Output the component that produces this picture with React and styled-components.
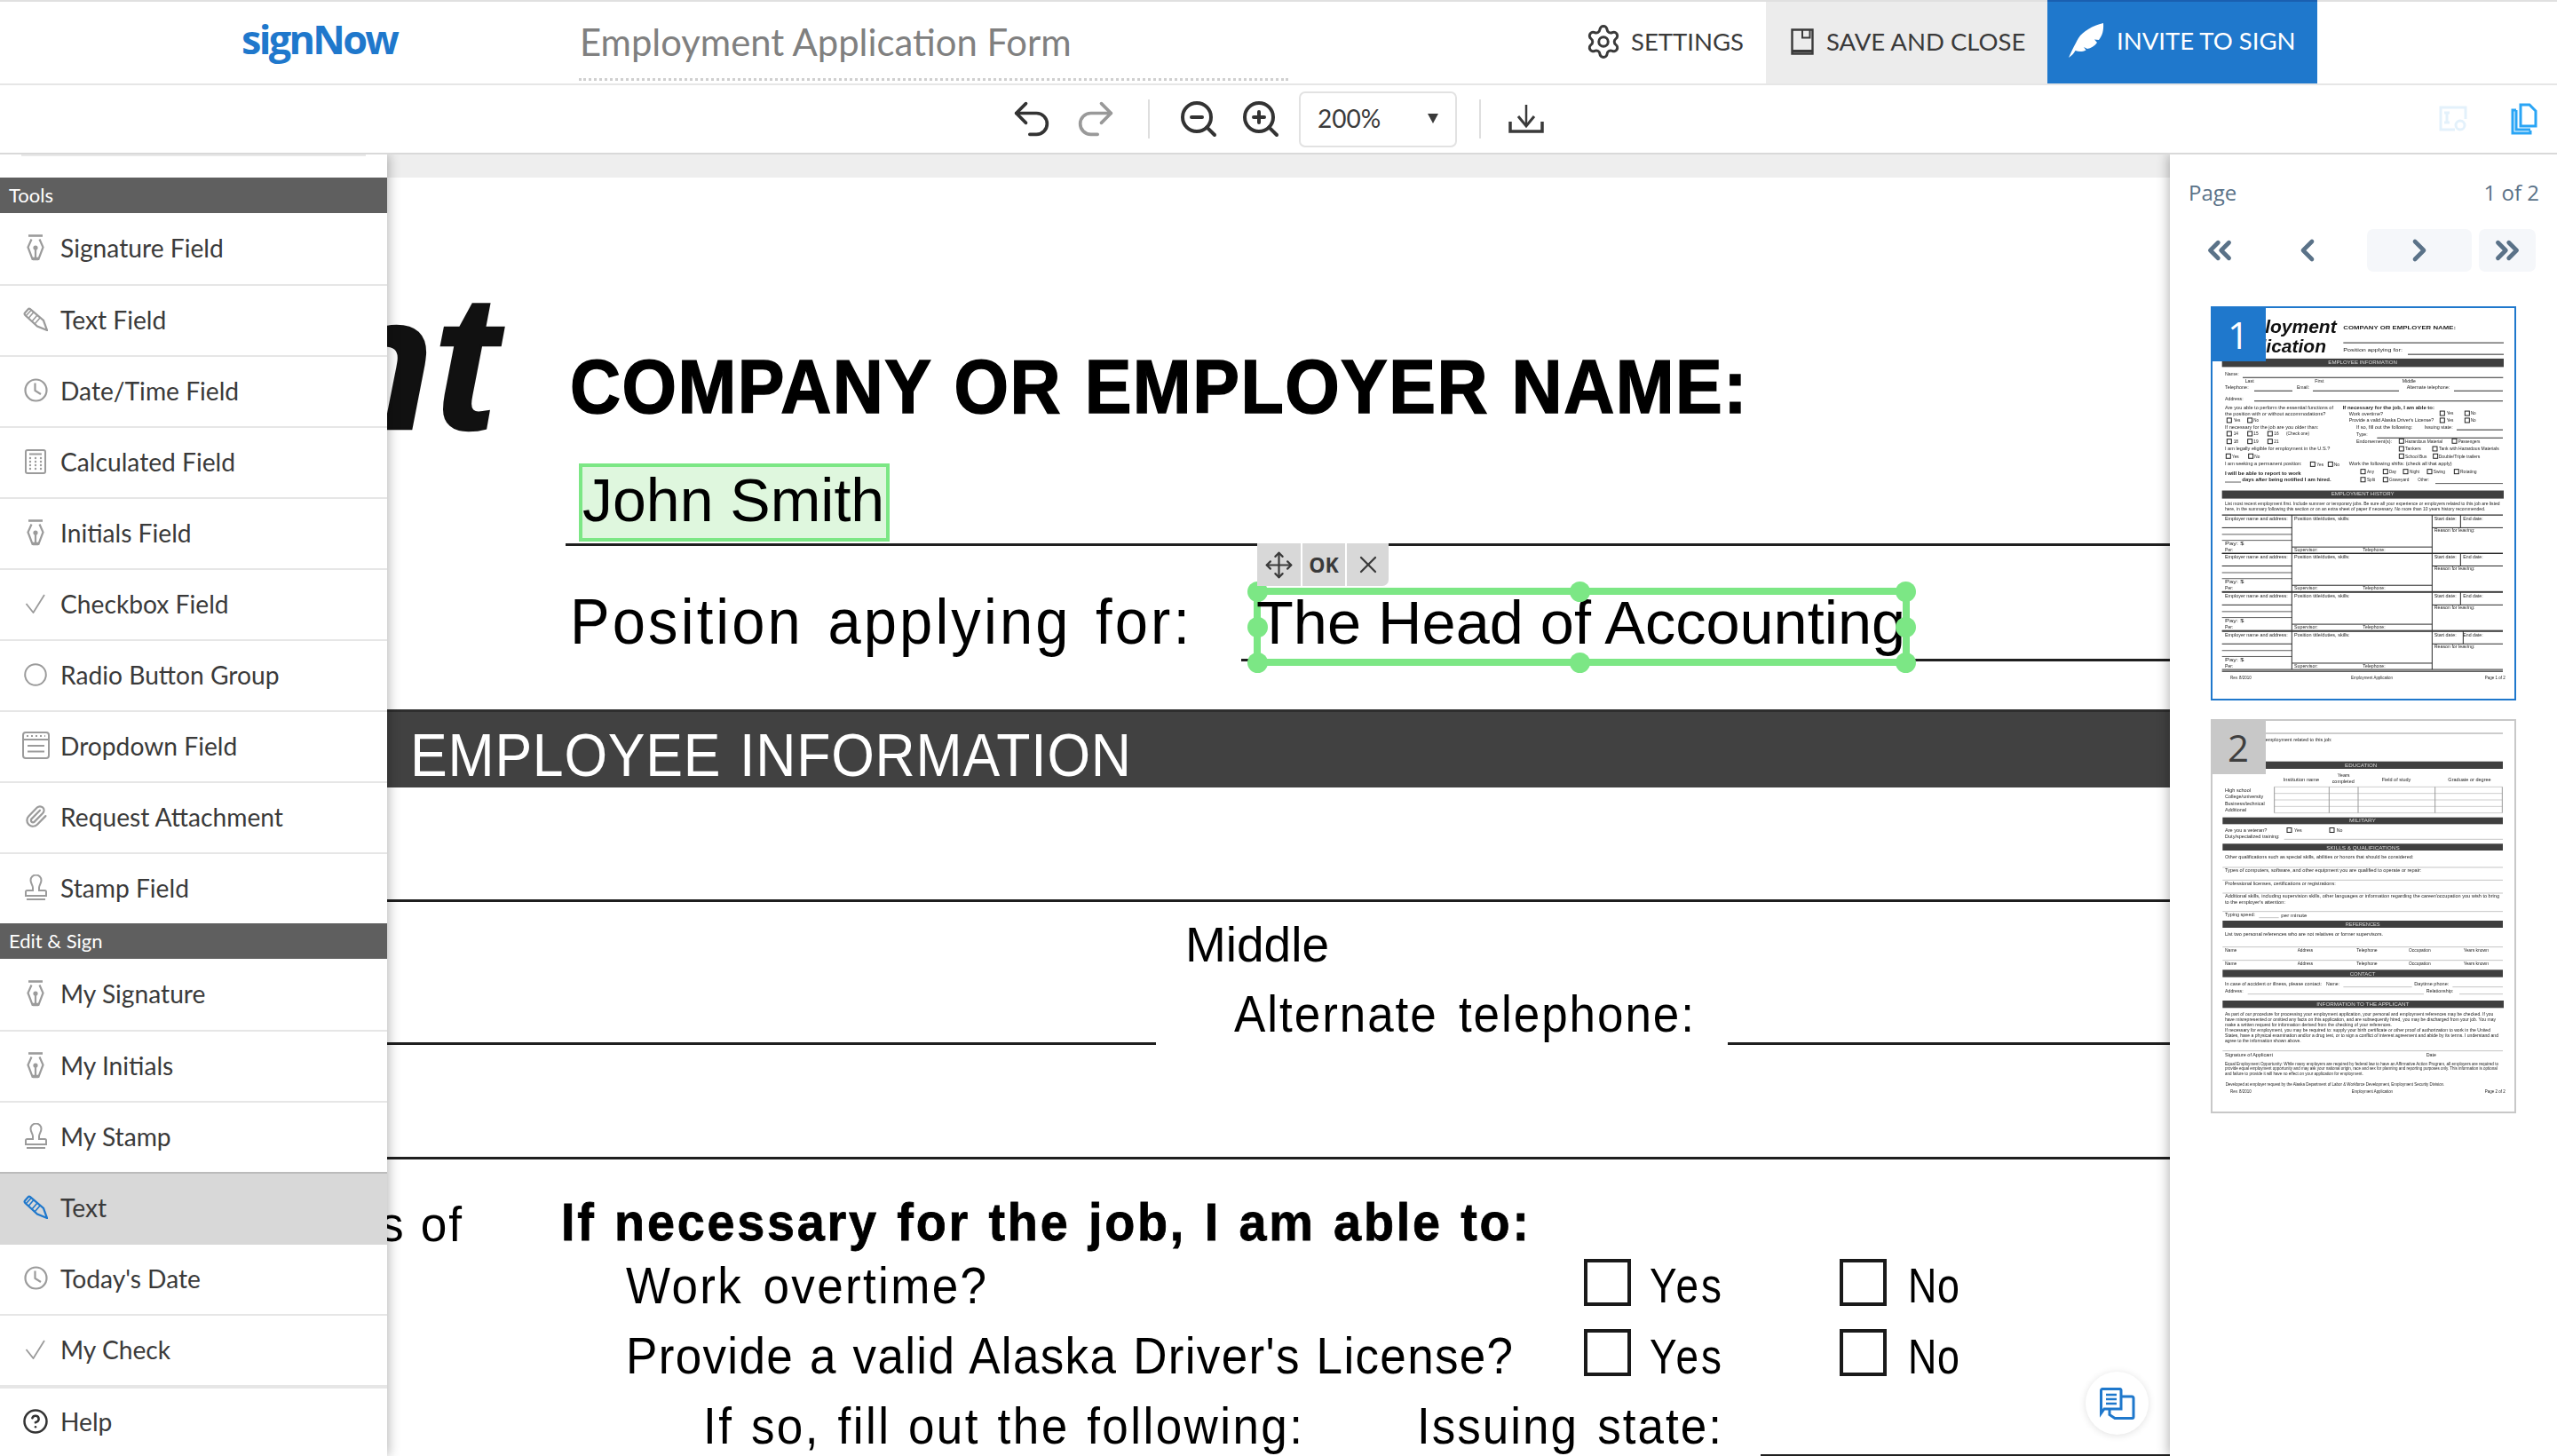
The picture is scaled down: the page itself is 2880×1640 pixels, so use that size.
import React from "react";
import styled, { createGlobalStyle } from "styled-components";
import { Undo2, Redo2, ZoomIn, ZoomOut, Settings, Move, X, Paperclip, CircleHelp, ChevronLeft, ChevronRight, ChevronsLeft, ChevronsRight } from "lucide-react";

const Global = createGlobalStyle`
  html, body { margin: 0; padding: 0; width: 2880px; height: 1640px; overflow: hidden; background: #fff; }
  * { box-sizing: border-box; }
  body { font-family: Lato, "Open Sans", sans-serif; color: #3a3a3a; }
`;

const Shell = styled.div`display: flex; flex-direction: column; width: 2880px; height: 1640px;`;

/* ---------- top bar ---------- */
const Header = styled.header`
  display: flex; align-items: stretch; height: 96px; background: #fff;
  border-top: 2px solid #e0e0e0; border-bottom: 2px solid #e6e6e6; padding-left: 272px; position: relative; z-index: 3;
`;
const Logo = styled.div`
  width: 380px; font-family: "Open Sans", sans-serif; font-weight: 700; font-size: 45px; letter-spacing: -2.7px;
  color: #1f78cc; line-height: 84px;
`;
const TitleField = styled.div`
  width: 799px; margin-bottom: 3px; border-bottom: 3px dotted #cfcfcf; padding-left: 1px;
  font-size: 41.800px; font-weight: 400; color: #808080; line-height: 90px; white-space: nowrap;
`;
const Actions = styled.div`display: flex; align-items: stretch; margin-left: auto; padding-right: 270px; font-size: 27.500px; text-transform: uppercase;`;
const Action = styled.div`
  display: flex; align-items: center; gap: ${p => p.$gap || 14}px; padding: 0 0 3px ${p => p.$pad}px;
  width: ${p => p.$w}px; background: ${p => p.$bg || "transparent"}; color: ${p => p.$fg || "#3a3a3a"};
  ${p => p.$cap ? `box-shadow: inset 0 2px 0 ${p.$cap}; margin-top:-2px;` : ""}
`;

/* ---------- second toolbar ---------- */
const Toolbar = styled.div`
  display: flex; align-items: center; height: 78px; padding-left: 1136px; padding-right: 22px; background: #fff;
  border-bottom: 2px solid #d9d9d9; position: relative; z-index: 3;
`;
const ToolGroup = styled.div`display: flex; align-items: center; gap: ${p => p.$gap}px;`;
const Sep = styled.span`width: 2px; height: 44px; background: #dedede; margin: 0 ${p => p.$r}px 0 ${p => p.$l}px;`;
const ZoomSelect = styled.div`
  display: flex; align-items: center; justify-content: space-between; width: 178px; height: 63px; margin-left: 19px;
  padding: 0 19px 2px 19px; border: 2px solid #e2e2e2; border-radius: 7px; font-size: 28px; color: #3a3a3a;
`;
const Caret = styled.span`width: 0; height: 0; border-left: 6px solid transparent; border-right: 6px solid transparent; border-top: 11px solid #3a3a3a;`;
const ToolRight = styled.div`display: flex; align-items: center; gap: 49px; margin-left: auto;`;

/* ---------- workspace ---------- */
const Workspace = styled.div`display: flex; flex: 1; min-height: 0;`;
const Sidebar = styled.aside`
  width: 436px; flex: none; background: #fff; padding-top: 26px; position: relative; z-index: 2;
  box-shadow: 2px 0 12px rgba(0,0,0,.28);
  &::before { content: ""; position: absolute; left: 24px; width: 388px; top: 0; height: 2px; background: #e8e8e8; }
`;
const SectionHead = styled.div`height: 40px; line-height: 40px; padding-left: 10px; background: #5f5f5f; color: #fff; font-size: 22px;`;
const ToolRow = styled.div`
  display: flex; align-items: center; height: ${p => p.$h || 80}px; padding-bottom: 3px;
  background: ${p => p.$active ? "#d8d8d8" : "#fff"}; font-size: 28.200px; color: #3a3a3a;
  border-top: ${p => p.$first ? "none" : `${p.$bw || 2}px solid ${p.$line || "#e6e6e6"}`};
`;
const ToolIcon = styled.span`width: 80px; margin-right: -12px; flex: none; display: flex; justify-content: center; color: ${p => p.$c || "#9b9b9b"};`;

const DocArea = styled.main`flex: 1; min-width: 0; background: #eee; padding-top: 26px; position: relative; overflow: hidden;`;
const Sheet = styled.div`position: relative; width: 100%; height: 1440px; background: #fff; overflow: hidden;`;

const Ox = 436, Oy = 200;
const Label = styled.span`
  position: absolute; white-space: pre; line-height: 1; transform-origin: left top; transform: scaleX(${p => p.$sx || 1});
  left: ${p => p.$x - Ox}px; top: ${p => p.$base - Oy - p.$size * 0.8465}px;
  font: ${p => p.$italic ? "italic " : ""}${p => p.$bold ? 700 : 400} ${p => p.$size}px/1 "Liberation Sans", Arial, sans-serif;
  color: ${p => p.$color || "#000"};
  ${p => p.$stroke ? `-webkit-text-stroke: ${p.$stroke}px currentColor;` : ""}
`;
const Rule = styled.i`position: absolute; display: block; left: ${p => p.$x1 - Ox}px; width: ${p => p.$x2 - p.$x1}px; top: ${p => p.$y - Oy}px; height: ${p => p.$h || 3}px; background: #1f1f1f;`;
const Band = styled.div`position: absolute; left: 0; right: 0; top: ${799 - Oy}px; height: 88px; background: #414141; border-top: 3px solid #2e2e2e;`;
const TickBox = styled.i`position: absolute; display: block; left: ${p => p.$x - Ox}px; top: ${p => p.$y - Oy}px; width: 53px; height: 53px; border: 4px solid #1a1a1a;`;
const NameField = styled.div`
  position: absolute; left: ${652 - Ox}px; top: ${522 - Oy}px; width: 350px; height: 88px; border: 4px solid #7ce785; background: #dff7de;
  font: 68px/74px "Liberation Sans", sans-serif; color: #000; white-space: nowrap;
`;
const Selection = styled.div`position: absolute; left: ${1412 - Ox}px; top: ${662 - Oy}px; width: 739px; height: 88px; border: 8px solid #7ce785;`;
const Handle = styled.i`position: absolute; display: block; width: 23px; height: 23px; border-radius: 50%; background: #7ce785; left: ${p => p.$l}px; top: ${p => p.$t}px;`;
const SelText = styled.span`position: absolute; left: -5px; top: -4px; font: 68.500px/72px "Liberation Sans", sans-serif; color: #000; white-space: nowrap;`;
const FieldBar = styled.div`
  position: absolute; left: ${1416 - Ox}px; top: ${612 - Oy}px; height: 48px; display: flex; background: #d8d8d8; border-radius: 0 0 7px 0; z-index: 2;
`;
const FieldBtn = styled.div`
  width: ${p => p.$w}px; display: flex; align-items: center; justify-content: center; color: #3a3a3a;
  font: 700 23px "Open Sans", sans-serif; border-left: ${p => p.$sep ? "2px solid #fff" : "none"};
`;
const ChatFab = styled.div`
  position: absolute; right: 24px; bottom: 24px; width: 71px; height: 71px; border-radius: 50%; background: #fff;
  display: flex; align-items: center; justify-content: center; box-shadow: 0 1px 8px rgba(0,0,0,.12); z-index: 1;
`;

/* ---------- right panel ---------- */
const PagePanel = styled.aside`
  width: 436px; flex: none; background: #fff; position: relative; z-index: 2; box-shadow: -2px 0 12px rgba(0,0,0,.28);
  padding: 30px 20px 0 21px; font-family: "Open Sans", sans-serif; color: #5a7288;
`;
const PagerInfo = styled.div`display: flex; justify-content: space-between; font-size: 24px; line-height: 26px;`;
const Pager = styled.div`display: flex; gap: 8px; margin: 28px 0 39px 3px; height: 48px;`;
const PagerBtn = styled.div`
  width: ${p => p.$w}px; display: flex; align-items: center; justify-content: center; border-radius: 7px;
  background: ${p => p.$on ? "#f5f7fa" : "transparent"}; color: #5a7288;
`;
const ThumbList = styled.div`display: flex; flex-direction: column; gap: 21px; padding-left: 25px;`;
const Thumb = styled.div`position: relative; width: 344px; height: 444px; background: #fff; border: 2px solid ${p => p.$active ? "#1f78cc" : "#c8c8c8"};`;
const ThumbBadge = styled.div`
  position: absolute; left: -2px; top: -2px; width: 62px; height: 62px; display: flex; align-items: center; justify-content: center;
  font-size: 42px; background: ${p => p.$active ? "#1f78cc" : "#c8c8c8"}; color: ${p => p.$active ? "#fff" : "#3f3f3f"};
`;
const ThumbArt = styled.svg`display: block; width: 340px; height: 440px; filter: blur(.45px); font-family: "Liberation Sans", sans-serif;`;

/* ---------- drawn icons ---------- */
const Nib = () => (
  <svg width="20" height="30" viewBox="0 0 20 30" fill="none" stroke="currentColor" strokeWidth="2.200">
    <path d="M2 1.500h16" strokeWidth="2.600" />
    <path d="M5.500 5.500 1.500 14.500 6.600 28h6.800l5.100-13.500-4-9" />
    <path d="M10 15v12" /><circle cx="10" cy="15" r="2.600" fill="currentColor" stroke="none" />
    <path d="M7 27.500h6" strokeWidth="3.500" />
  </svg>
);
const Pencil = () => (
  <svg width="28" height="27" viewBox="0 0 28 27" fill="none" stroke="currentColor" strokeWidth="2.200">
    <path d="M2 6.500 5.500 2.500c.8-.9 1.700-1 2.500-.3L23 15l4 11-11-4.500L2.300 9c-.8-.8-1-1.600-.3-2.500Z" />
    <path d="M3 10 9.500 3M6 12.500l6-7M10 16l6-7M13 19l6.500-7.500" strokeWidth="1.600" />
  </svg>
);
const Clock = () => (
  <svg width="27" height="27" viewBox="0 0 27 27" fill="none" stroke="currentColor" strokeWidth="2.200">
    <circle cx="13.500" cy="13.500" r="12" /><path d="M12.500 5.500v8.500l6.500 4" />
  </svg>
);
const Calc = () => (
  <svg width="24" height="28" viewBox="0 0 24 28" fill="none" stroke="currentColor" strokeWidth="2">
    <rect x="1" y="1" width="22" height="26" rx="2" /><path d="M5 5.500h14" strokeWidth="2" />
    {[10, 14, 18, 22].map(y => [6, 12, 18].map(x => <circle key={x + "-" + y} cx={x} cy={y} r="1.200" fill="currentColor" stroke="none" />))}
  </svg>
);
const Tick = () => (
  <svg width="24" height="22" viewBox="0 0 24 22" fill="none" stroke="currentColor" strokeWidth="1.800"><path d="M1.500 11 9.500 21 22 1" /></svg>
);
const Radio = () => (
  <svg width="26" height="26" viewBox="0 0 26 26" fill="none" stroke="currentColor" strokeWidth="2"><circle cx="13" cy="13" r="11.800" /></svg>
);
const Drop = () => (
  <svg width="31" height="31" viewBox="0 0 31 31" fill="none" stroke="currentColor" strokeWidth="2">
    <rect x="1" y="1" width="29" height="29" rx="3" /><path d="M1 9h29M6 16h19M6 22.500h19" />
    <path d="M5 5h21" strokeDasharray="2 3" />
  </svg>
);
const Stamp = () => (
  <svg width="25" height="30" viewBox="0 0 25 30" fill="none" stroke="currentColor" strokeWidth="2">
    <path d="M9 15c0-3-2.500-5-2.500-8.500a6 6 0 0 1 12 0C18.500 10 16 12 16 15v3h6.500a1.500 1.500 0 0 1 1.500 1.500V24H1v-4.500A1.500 1.500 0 0 1 2.500 18H9v-3Z" />
    <path d="M2 28h21" />
  </svg>
);
const Floppy = () => (
  <svg width="26" height="30" viewBox="0 0 26 30" fill="none" stroke="#3a3a3a" strokeWidth="2.400">
    <path d="M1.500 1.500h23v27h-23z" /><path d="M1.500 25.500h23" strokeWidth="3" /><path d="M13 1.500v9h8.500v-9" strokeWidth="2" />
  </svg>
);
const Quill = () => (
  <svg width="41" height="39" viewBox="0 0 41 39" fill="#fff">
    <path d="M1 39C5 30 8 24 12 17 17 9 28 3 40 0c.6 8-1 14-5 19l-5-.5 3 3.500c-3 4-7 6.500-11 7l-4-2 2.500 3.500c-4 2-8 2-12 .5C7 34 4 37 1 39Z" />
  </svg>
);
const Tray = () => (
  <svg width="40" height="32" viewBox="0 0 40 32" fill="none" stroke="#3a3a3a">
    <path d="M20 0v23" strokeWidth="2.500" /><path d="M11 13 20 24 29 13" strokeWidth="3" />
    <path d="M2 19v11h36V19" strokeWidth="3.500" />
  </svg>
);
const PagesConfig = () => (
  <svg width="32" height="30" viewBox="0 0 32 30" fill="none" stroke="#e3f1fb" strokeWidth="3">
    <path d="M18 27H2V2h28v13" /><path d="M9 8v11M6 8h6M6 19h6" /><circle cx="24" cy="22" r="5" />
  </svg>
);
const PagesCopy = () => (
  <svg width="30" height="36" viewBox="0 0 30 36" fill="none" stroke="#2aa5f5" strokeWidth="3">
    <path d="M11 2h10l7 7v17H11z" /><path d="M6 8H2v26h20v-3" /><path d="M6 8v22h16" />
  </svg>
);
const Notes = () => (
  <svg width="40" height="36" viewBox="0 0 40 36" fill="none" stroke="#1f78cc" strokeWidth="3">
    <path d="M10 24H5l-3.500 5V3a1.500 1.500 0 0 1 1.500-1.500h19A1.500 1.500 0 0 1 24 3v21H10" />
    <path d="M24 10h12a2 2 0 0 1 2 2v21a1.500 1.500 0 0 1-1.500 1.500H17l-6-4V24" />
    <path d="M7 8h12M7 13h12M7 18h12" strokeWidth="2.500" />
  </svg>
);

/* ---------- fitted document text: most of the slack goes to the letters, a little to word gaps ---------- */
const ctx = typeof document !== "undefined" ? document.createElement("canvas").getContext("2d") : null;
const fitFor = (text, size, bold, italic, x, end, sx) => {
  if (!end || !ctx) return undefined;
  ctx.font = `${italic ? "italic " : ""}${bold ? 700 : 400} ${size}px "Liberation Sans"`;
  const slack = (end - x) / sx - ctx.measureText(text).width;
  const spaces = text.split(" ").length - 1;
  if (!spaces) return { letterSpacing: slack / Math.max(text.length - 1, 1) };
  return { letterSpacing: (slack * 0.85) / (text.length - 1), wordSpacing: (slack * 0.15) / spaces };
};
const DocText = ({ x, base, size, bold, italic, end, color, sx = 1, stroke, children }) => (
  <Label $x={x} $base={base} $size={size} $bold={bold} $italic={italic} $color={color} $sx={sx} $stroke={stroke}
    style={fitFor(children, size, bold, italic, x, end, sx)}>{children}</Label>
);

/* ---------- thumbnails ---------- */
const tableRows = tops => tops.flatMap(t => [
  ["l", 188, t, 1137, 2.500], ["l", 188, t + 36, 424, 2], ["l", 898, t + 36, 1137, 2], ["l", 188, t + 55, 424, 1.500], ["l", 188, t + 72, 424, 1.500],
  ["l", 424, t + 91, 898, 2], ["l", 188, t + 109, 1137, 2],
  ["v", 424, t, t + 109], ["v", 898, t, t + 109], ["v", t === 1346 ? 1003 : 994, t, t + 36],
  ["t", 198, t + 10, 410, "Employer name and address:"], ["t", 432, t + 10, 620, "Position title/duties, skills:"],
  ["t", 905, t + 10, 980, "Start date:"], ["t", 1003, t + 10, 1070, "End date:"], ["t", 905, t + 43, 1042, "Reason for leaving:"],
  ["t", 198, t + 81, 262, "Pay:    $"], ["t", 198, t + 98, 226, "Per:"], ["t", 432, t + 98, 512, "Supervisor:"], ["t", 664, t + 98, 740, "Telephone:"],
]);
const labelled = (rowY, list) => list.flatMap(([bx, tx, te, txt]) => [["b", bx, rowY], ["t", tx, rowY, te, txt]]);

const page1 = [
  ["big", 575, 477, "loyment"], ["big", 540, 535, "lication"],
  ["t", 598, 481, 978, "COMPANY OR EMPLOYER NAME:", 1], ["l", 598, 524, 1140, 2], ["t", 598, 545, 798, "Position applying for:"], ["l", 816, 557, 1140, 2],
  ["band", 188, 569, 1140, 593], ["w", 547, 581, 780, "EMPLOYEE INFORMATION"],
  ["t", 198, 612, 245, "Name:"], ["l", 258, 623, 1138, 2], ["t", 266, 632, 296, "Last"], ["t", 502, 632, 532, "First"], ["t", 797, 632, 843, "Middle"],
  ["t", 198, 651, 278, "Telephone:"], ["l", 297, 661, 426, 2], ["t", 441, 651, 483, "Email:"], ["l", 495, 661, 786, 2], ["t", 812, 651, 958, "Alternate telephone:"], ["l", 972, 661, 1137, 2],
  ["t", 198, 683, 260, "Address:"], ["l", 297, 690, 1137, 2],
  ["t", 198, 708, 564, "Are you able to perform the essential functions of"], ["t", 198, 726, 538, "the position with or without accommodations?"],
  ...labelled(745, [[205, 227, 250, "Yes"], [275, 295, 312, "No"]]),
  ["t", 198, 764, 514, "If necessary for the job are you older than:"],
  ...labelled(783, [[205, 227, 243, "14"], [275, 295, 311, "15"], [343, 364, 380, "16"]]), ["t", 405, 783, 483, "(Check one)"],
  ...labelled(805, [[205, 227, 243, "18"], [275, 295, 311, "19"], [343, 364, 380, "21"]]),
  ["t", 198, 825, 553, "I am legally eligible for employment in the U.S.?"],
  ...labelled(847, [[202, 222, 245, "Yes"], [278, 298, 316, "No"]]),
  ["t", 198, 868, 458, "I am seeking a permanent position:"], ...labelled(870, [[487, 508, 531, "Yes"], [547, 566, 585, "No"]]),
  ["t", 198, 895, 455, "I will be able to report to work", 1], ["l", 198, 921, 252, 1.500], ["t", 256, 913, 557, "days after being notified I am hired.", 1],
  ["t", 596, 708, 906, "If necessary for the job, I am able to:", 1],
  ["t", 617, 726, 732, "Work overtime?"], ...labelled(725, [[925, 947, 970, "Yes"], [1009, 1028, 1046, "No"]]),
  ["t", 617, 744, 904, "Provide a valid Alaska Driver's License?"], ...labelled(745, [[925, 947, 970, "Yes"], [1009, 1028, 1046, "No"]]),
  ["t", 642, 764, 832, "If so, fill out the following:"], ["t", 872, 764, 968, "Issuing state:"], ["l", 981, 772, 1137, 2],
  ["t", 642, 784, 680, "Type:"], ["l", 712, 795, 1137, 2],
  ["t", 642, 804, 762, "Endorsement(s):"], ...labelled(804, [[787, 807, 933, "Hazardous Material"], [966, 986, 1060, "Passengers"]]),
  ...labelled(826, [[787, 807, 860, "Tankers"], [900, 921, 1124, "Tank with Hazardous Materials"]]),
  ...labelled(847, [[787, 807, 880, "School Bus"], [902, 920, 1060, "Double/Triple trailers"]]),
  ["t", 617, 868, 965, "Work the following shifts: (check all that apply)"],
  ...labelled(891, [[657, 678, 702, "Any"], [733, 753, 777, "Day"], [801, 822, 855, "Night"], [882, 902, 942, "Swing"], [973, 993, 1049, "Rotating"]]),
  ...labelled(914, [[657, 678, 705, "Split"], [733, 753, 820, "Graveyard"]]), ["t", 850, 914, 888, "Other:"], ["l", 909, 925, 1137, 1.500],
  ["band", 188, 945, 1140, 968], ["w", 557, 955, 770, "EMPLOYMENT HISTORY"],
  ["t", 198, 982, 1127, "List most recent employment first. Include summer or temporary jobs. Be sure all your experience or employers related to this job are listed"],
  ["t", 198, 997, 1078, "here, in the summary following this section or on an extra sheet of paper if necessary. No more than 10 years history recommended."],
  ...tableRows([1015, 1124, 1235, 1346]),
  ["l", 188, 1460, 1137, 2.500],
  ["t", 216, 1478, 287, "Rev. 8/2010"], ["t", 624, 1478, 765, "Employment Application"], ["t", 1076, 1478, 1145, "Page 1 of 2"],
];

const page2 = [
  ["l", 335, 110, 1137, 2, "#9a9a9a"], ["t", 335, 132, 560, "employment related to this job:"],
  ["band", 190, 205, 1137, 230], ["w", 603, 220, 712, "EDUCATION"],
  ["t", 395, 267, 517, "Institution name"], ["t", 578, 252, 620, "Years"], ["t", 560, 272, 635, "completed"], ["t", 728, 267, 826, "Field of study"], ["t", 952, 267, 1097, "Graduate or degree"],
  ...[291, 313, 335, 357, 379].map(y => ["l", 365, y, 1135, 1, "#9a9a9a"]),
  ...[365, 550, 648, 908, 1135].map(x => ["v", x, 291, 379, "#9a9a9a"]),
  ["t", 198, 302, 285, "High school"], ["t", 198, 325, 328, "College/university"], ["t", 198, 347, 332, "Business/technical"], ["t", 198, 369, 270, "Additional"],
  ["band", 190, 394, 1137, 417], ["w", 618, 406, 708, "MILITARY"],
  ["t", 198, 438, 340, "Are you a veteran?"], ["b", 408, 437], ["t", 432, 438, 458, "Yes"], ["b", 552, 437], ["t", 575, 438, 595, "No"],
  ["t", 198, 460, 383, "Duty/specialized training:"], ["l", 398, 468, 1137, 1, "#8a8a8a"],
  ["band", 190, 483, 1137, 506], ["w", 541, 497, 788, "SKILLS & QUALIFICATIONS"],
  ["t", 198, 528, 835, "Other qualifications such as special skills, abilities or honors that should be considered:"], ["l", 190, 563, 1137, 1, "#8a8a8a"],
  ["t", 198, 574, 862, "Types of computers, software, and other equipment you are qualified to operate or repair:"], ["l", 190, 606, 1137, 1, "#8a8a8a"],
  ["t", 198, 617, 572, "Professional licenses, certifications or registrations:"], ["l", 190, 650, 1137, 1, "#8a8a8a"],
  ["t", 198, 660, 1125, "Additional skills, including supervision skills, other languages or information regarding the career/occupation you wish to bring"],
  ["t", 198, 681, 402, "to the employer's attention:"], ["l", 190, 712, 1137, 1, "#8a8a8a"],
  ["t", 198, 723, 300, "Typing speed:"], ["l", 313, 733, 380, 1, "#8a8a8a"], ["t", 388, 725, 475, "per minute"],
  ["band", 190, 743, 1137, 767], ["w", 605, 756, 722, "REFERENCES"],
  ["t", 198, 789, 732, "List two personal references who are not relatives or former supervisors."], ["l", 190, 832, 1137, 1, "#8a8a8a"],
  ...[844, 889].flatMap(y => [["t", 198, y, 238, "Name"], ["t", 443, y, 495, "Address"], ["t", 643, y, 713, "Telephone"], ["t", 819, y, 893, "Occupation"], ["t", 1004, y, 1089, "Years known"]]),
  ["l", 190, 877, 1137, 1, "#8a8a8a"],
  ["band", 190, 909, 1137, 934], ["w", 620, 923, 706, "CONTACT"],
  ["t", 198, 956, 525, "In case of accident or illness, please contact:"], ["t", 540, 956, 585, "Name:"], ["l", 598, 967, 830, 1, "#8a8a8a"], ["t", 838, 956, 955, "Daytime phone:"], ["l", 967, 967, 1137, 1, "#8a8a8a"],
  ["t", 198, 980, 260, "Address:"], ["l", 275, 991, 870, 1, "#8a8a8a"], ["t", 878, 980, 970, "Relationship:"], ["l", 990, 991, 1137, 1, "#8a8a8a"],
  ["band", 190, 1013, 1140, 1038], ["w", 508, 1027, 820, "INFORMATION TO THE APPLICANT"],
  ["t", 198, 1058, 1105, "As part of our procedure for processing your employment application, your personal and employment references may be checked. If you"],
  ["t", 198, 1077, 1113, "have misrepresented or omitted any facts on this application, and are subsequently hired, you may be discharged from your job. You may"],
  ["t", 198, 1095, 762, "make a written request for information derived from the checking of your references."],
  ["t", 198, 1112, 1095, "If necessary for employment, you may be required to: supply your birth certificate or other proof of authorization to work in the United"],
  ["t", 198, 1130, 1122, "States, have a physical examination and/or a drug test, or to sign a conflict of interest agreement and abide by its terms. I understand and"],
  ["t", 198, 1149, 455, "agree to the information shown above."], ["l", 190, 1183, 1137, 1, "#8a8a8a"],
  ["t", 198, 1196, 360, "Signature of Applicant"], ["t", 878, 1196, 912, "Date"],
  ["t", 198, 1226, 1122, "Equal Employment Opportunity: While many employers are required by federal law to have an Affirmative Action Program, all employers are required to"],
  ["t", 198, 1243, 1118, "provide equal employment opportunity and may ask your national origin, race and sex for planning and reporting purposes only. This information is optional"],
  ["t", 198, 1259, 665, "and failure to provide it will have no effect on your application for employment."],
  ["t", 200, 1295, 940, "Developed at employer request by the Alaska Department of Labor & Workforce Development, Employment Security Division."],
  ["t", 216, 1320, 287, "Rev. 8/2010"], ["t", 626, 1320, 765, "Employment Application"], ["t", 1076, 1320, 1145, "Page 2 of 2"],
];

const ThumbPage = ({ items, y0, sy }) => {
  const X = v => (v - 150) / 3 - 2;
  const Y = v => (v - y0) / sy - 2;
  return (
    <ThumbArt viewBox="0 0 340 440">
      {items.map((it, i) => {
        const k = it[0];
        if (k === "l") return <line key={i} x1={X(it[1])} x2={X(it[3])} y1={Y(it[2])} y2={Y(it[2])} stroke={it[5] || "#2a2a2a"} strokeWidth={(it[4] || 2) / 2} />;
        if (k === "v") return <line key={i} x1={X(it[1])} x2={X(it[1])} y1={Y(it[2])} y2={Y(it[3])} stroke={it[4] || "#2a2a2a"} strokeWidth="1" />;
        if (k === "band") return <rect key={i} x={X(it[1])} y={Y(it[2])} width={(it[3] - it[1]) / 3} height={(it[4] - it[2]) / sy} fill="#3f3f3f" />;
        if (k === "b") return <rect key={i} x={X(it[1])} y={Y(it[2]) - 2.500} width="5" height="5" fill="#fff" stroke="#222" strokeWidth="1" />;
        if (k === "big") return <text key={i} x={X(it[1])} y={Y(it[2]) + 7} textAnchor="end" fontSize="21" fontWeight="700" fontStyle="italic" fill="#111">{it[3]}</text>;
        const w = k === "w";
        return <text key={i} x={X(it[1])} y={Y(it[2]) + 1.800} fontSize="5.200" fontWeight={it[5] ? 700 : 400} fill={w ? "#ddd" : "#222"}
          textLength={(it[3] - it[1]) / 3} lengthAdjust="spacingAndGlyphs">{it[4]}</text>;
      })}
    </ThumbArt>
  );
};

const tools = [
  [Nib, "Signature Field"], [Pencil, "Text Field"], [Clock, "Date/Time Field"], [Calc, "Calculated Field"], [Nib, "Initials Field"],
  [Tick, "Checkbox Field"], [Radio, "Radio Button Group"], [Drop, "Dropdown Field"], [() => <Paperclip size={27} strokeWidth={2} />, "Request Attachment"], [Stamp, "Stamp Field"],
];
const edits = [[Nib, "My Signature"], [Nib, "My Initials"], [Stamp, "My Stamp"], [Pencil, "Text", true], [Clock, "Today's Date"], [Tick, "My Check"]];
const handles = [[-15.5, -15.5], [347.5, -15.5], [714.5, -15.5], [-15.5, 24.5], [714.5, 24.5], [-15.5, 64.5], [347.5, 64.5], [714.5, 64.5]];

export default function App() {
  return (
    <Shell>
      <Global />
      <Header>
        <Logo>signNow</Logo>
        <TitleField>Employment Application Form</TitleField>
        <Actions>
          <Action $w={204} $pad={0} $gap={10}><Settings size={42} strokeWidth={1.700} />Settings</Action>
          <Action $w={317} $pad={28} $bg="#ececec" $gap={14}><Floppy />Save and Close</Action>
          <Action $w={304} $pad={23} $bg="#1f78cc" $fg="#fff" $gap={14} $cap="#1a5fb0"><Quill />Invite to Sign</Action>
        </Actions>
      </Header>

      <Toolbar>
        <ToolGroup $gap={20}>
          <Undo2 size={52} strokeWidth={1.700} color="#333" />
          <Redo2 size={52} strokeWidth={1.700} color="#999" />
        </ToolGroup>
        <Sep $l={33} $r={31} />
        <ToolGroup $gap={22}>
          <ZoomOut size={48} strokeWidth={2} color="#333" />
          <ZoomIn size={48} strokeWidth={2} color="#333" />
        </ToolGroup>
        <ZoomSelect>200%<Caret /></ZoomSelect>
        <Sep $l={25} $r={31} />
        <Tray />
        <ToolRight><PagesConfig /><PagesCopy /></ToolRight>
      </Toolbar>

      <Workspace>
        <Sidebar>
          <SectionHead>Tools</SectionHead>
          {tools.map(([Icon, name], i) => (
            <ToolRow key={name} $first={i === 0}><ToolIcon><Icon /></ToolIcon>{name}</ToolRow>
          ))}
          <SectionHead>Edit &amp; Sign</SectionHead>
          {edits.map(([Icon, name, on], i) => (
            <ToolRow key={name} $first={i === 0} $active={on} $line={on ? "#bbbbbb" : i === 4 ? "#d8d8d8" : "#e6e6e6"}>
              <ToolIcon $c={on ? "#1f78cc" : undefined}><Icon /></ToolIcon>{name}
            </ToolRow>
          ))}
          <ToolRow $bw={4} $line="#e6e6e6"><ToolIcon $c="#333"><CircleHelp size={30} strokeWidth={2} /></ToolIcon>Help</ToolRow>
        </Sidebar>

        <DocArea>
          <Sheet>
            <DocText x={356} base={483} size={216} bold italic color="#111" stroke={2.500}>nt</DocText>
            <DocText x={642} base={465} size={85} bold end={1969} sx={.93} stroke={1.500}>COMPANY OR EMPLOYER NAME:</DocText>
            <NameField>John Smith</NameField>
            <Rule $x1={637} $x2={2444} $y={612} />
            <DocText x={642} base={725} size={72} end={1340} sx={.93}>Position applying for:</DocText>
            <Rule $x1={1398} $x2={2444} $y={742} />
            <Band />
            <DocText x={462} base={874} size={68} color="#fff" end={1274} sx={.92}>EMPLOYEE INFORMATION</DocText>
            <Rule $x1={436} $x2={2444} $y={1013} />
            <DocText x={1335} base={1084} size={55}>Middle</DocText>
            <DocText x={1390} base={1162} size={57} end={1908} sx={.93}>Alternate telephone:</DocText>
            <Rule $x1={436} $x2={1302} $y={1174} />
            <Rule $x1={1946} $x2={2444} $y={1174} />
            <Rule $x1={436} $x2={2444} $y={1303} />
            <DocText x={428} base={1398} size={56} end={520} sx={.95}>s of</DocText>
            <DocText x={632} base={1398} size={60} bold end={1722} sx={.93} stroke={.8}>If necessary for the job, I am able to:</DocText>
            <DocText x={705} base={1468} size={57} end={1111} sx={.93}>Work overtime?</DocText>
            <DocText x={705} base={1547} size={57} end={1707} sx={.93}>Provide a valid Alaska Driver's License?</DocText>
            <DocText x={792} base={1626} size={57} end={1467} sx={.93}>If so, fill out the following:</DocText>
            <DocText x={1596} base={1626} size={57} end={1939} sx={.93}>Issuing state:</DocText>
            <Rule $x1={1983} $x2={2444} $y={1638} />
            <TickBox $x={1784} $y={1418} /><DocText x={1858} base={1467} size={56} end={1939} sx={.82}>Yes</DocText>
            <TickBox $x={2072} $y={1418} /><DocText x={2149} base={1467} size={56} end={2207} sx={.8}>No</DocText>
            <TickBox $x={1784} $y={1497} /><DocText x={1858} base={1547} size={56} end={1939} sx={.82}>Yes</DocText>
            <TickBox $x={2072} $y={1497} /><DocText x={2149} base={1547} size={56} end={2207} sx={.8}>No</DocText>

            <Selection>
              <SelText>The Head of Accounting</SelText>
              {handles.map(([l, t]) => <Handle key={l + "/" + t} $l={l} $t={t} />)}
            </Selection>
            <FieldBar>
              <FieldBtn $w={49}><Move size={33} strokeWidth={1.600} /></FieldBtn>
              <FieldBtn $w={50} $sep>OK</FieldBtn>
              <FieldBtn $w={49} $sep><X size={32} strokeWidth={1.700} /></FieldBtn>
            </FieldBar>
          </Sheet>
          <ChatFab><Notes /></ChatFab>
        </DocArea>

        <PagePanel>
          <PagerInfo><span>Page</span><span>1 of 2</span></PagerInfo>
          <Pager>
            <PagerBtn $w={64}><ChevronsLeft size={42} strokeWidth={2.800} /></PagerBtn>
            <PagerBtn $w={118}><ChevronLeft size={40} strokeWidth={2.800} /></PagerBtn>
            <PagerBtn $w={118} $on><ChevronRight size={40} strokeWidth={2.800} /></PagerBtn>
            <PagerBtn $w={64} $on><ChevronsRight size={42} strokeWidth={2.800} /></PagerBtn>
          </Pager>
          <ThumbList>
            <Thumb $active>
              <ThumbPage items={page1} y0={420} sy={2.53} />
              <ThumbBadge $active>1</ThumbBadge>
            </Thumb>
            <Thumb>
              <ThumbPage items={page2} y0={62} sy={3} />
              <ThumbBadge>2</ThumbBadge>
            </Thumb>
          </ThumbList>
        </PagePanel>
      </Workspace>
    </Shell>
  );
}
